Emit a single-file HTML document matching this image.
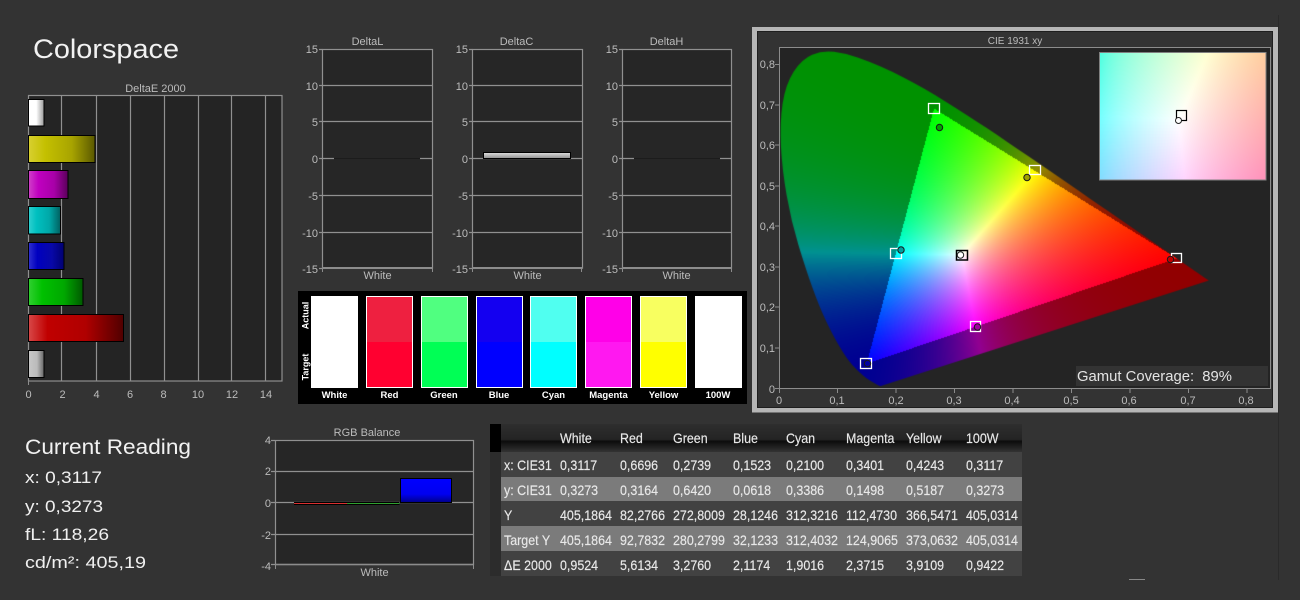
<!DOCTYPE html>
<html><head><meta charset="utf-8"><title>Colorspace</title>
<style>
html,body{margin:0;padding:0;background:#333;width:1300px;height:600px;overflow:hidden}
svg,canvas{position:absolute;left:0;top:0;display:block}
text{font-family:"Liberation Sans",Arial,sans-serif}
.t{font-size:11px;fill:#bcbcbc}
.r{text-anchor:end}
.m{text-anchor:middle}
.s{font-size:9.500px;font-weight:bold;fill:#fff;text-anchor:middle}
.b{fill:#f0f0f0;font-size:17px}
.c text{font-size:14px;fill:#e8e8e8;stroke:#e8e8e8;stroke-width:.15px}
</style></head><body>
<svg width="1300" height="600" viewBox="0 0 1300 600" xmlns="http://www.w3.org/2000/svg">
<defs>
<linearGradient id="gw"><stop offset="0" stop-color="#fff"/><stop offset=".5" stop-color="#fff"/><stop offset="1" stop-color="#999"/></linearGradient>
<linearGradient id="gy"><stop offset="0" stop-color="#d8d030"/><stop offset=".25" stop-color="#c4c000"/><stop offset=".65" stop-color="#a8a400"/><stop offset="1" stop-color="#5a5800"/></linearGradient>
<linearGradient id="gm"><stop offset="0" stop-color="#d040c8"/><stop offset=".25" stop-color="#c000c0"/><stop offset=".65" stop-color="#a800a8"/><stop offset="1" stop-color="#5a005a"/></linearGradient>
<linearGradient id="gc"><stop offset="0" stop-color="#30d0d0"/><stop offset=".25" stop-color="#00c0c0"/><stop offset=".65" stop-color="#00a8a8"/><stop offset="1" stop-color="#006060"/></linearGradient>
<linearGradient id="gb"><stop offset="0" stop-color="#3030d0"/><stop offset=".25" stop-color="#0000c0"/><stop offset=".65" stop-color="#0808a8"/><stop offset="1" stop-color="#000070"/></linearGradient>
<linearGradient id="gg"><stop offset="0" stop-color="#30d030"/><stop offset=".25" stop-color="#00c000"/><stop offset=".65" stop-color="#00a800"/><stop offset="1" stop-color="#005a00"/></linearGradient>
<linearGradient id="gr"><stop offset="0" stop-color="#d84848"/><stop offset=".2" stop-color="#c00000"/><stop offset=".6" stop-color="#b00000"/><stop offset="1" stop-color="#500000"/></linearGradient>
<linearGradient id="ga"><stop offset="0" stop-color="#c8c8c8"/><stop offset=".55" stop-color="#bbb"/><stop offset="1" stop-color="#666"/></linearGradient>
<linearGradient id="gd" x2="0" y2="1"><stop offset="0" stop-color="#e0e0e0"/><stop offset="1" stop-color="#909090"/></linearGradient>
<linearGradient id="gl" x2="0" y2="1"><stop offset="0" stop-color="#0000ff"/><stop offset=".65" stop-color="#0000f0"/><stop offset="1" stop-color="#000088"/></linearGradient>
<linearGradient id="gh" x2="0" y2="1"><stop offset="0" stop-color="#2e2e2e"/><stop offset=".55" stop-color="#242424"/><stop offset=".62" stop-color="#0c0c0c"/><stop offset="1" stop-color="#333"/></linearGradient>
</defs>

<rect x="1278" y="15" width="1" height="565" fill="#2a2a2a"/>
<rect x="1129" y="579" width="16" height="1" fill="#888"/>

<text x="33" y="58" font-size="27" fill="#f2f2f2" textLength="146" lengthAdjust="spacingAndGlyphs">Colorspace</text>

<!-- DeltaE 2000 -->
<text class="t m" x="155.500" y="92">DeltaE 2000</text>
<rect x="28.500" y="95.500" width="253.500" height="285.500" fill="#242424" stroke="#909090" stroke-width="1.200"/>
<g stroke="#909090" stroke-width="1.200"><path d="M61.500 96V381M96.500 96V381M130.500 96V381M164.500 96V381M198.500 96V381M231.500 96V381M265.500 96V381"/></g>
<g stroke="#000" stroke-width="1">
<rect x="28.500" y="99.500" width="15.500" height="26.500" fill="url(#gw)"/>
<rect x="28.500" y="135.500" width="66.500" height="27" fill="url(#gy)"/>
<rect x="28.500" y="170.500" width="39.500" height="28" fill="url(#gm)"/>
<rect x="28.500" y="206.500" width="32" height="27.500" fill="url(#gc)"/>
<rect x="28.500" y="242.500" width="35.500" height="27" fill="url(#gb)"/>
<rect x="28.500" y="278.500" width="54.500" height="27" fill="url(#gg)"/>
<rect x="28.500" y="314.500" width="95" height="27" fill="url(#gr)"/>
<rect x="28.500" y="350.500" width="15.500" height="27" fill="url(#ga)"/>
</g>
<path d="M28.500 381v4" stroke="#8c8c8c"/>
<g><text class="t m" x="28.500" y="398">0</text><text class="t m" x="62.500" y="398">2</text><text class="t m" x="96.500" y="398">4</text><text class="t m" x="130" y="398">6</text><text class="t m" x="163.500" y="398">8</text><text class="t m" x="198" y="398">10</text><text class="t m" x="232" y="398">12</text><text class="t m" x="266" y="398">14</text></g>

<!-- DeltaL -->
<text class="t m" x="367.500" y="45">DeltaL</text>
<rect x="322.500" y="49.500" width="110" height="218.500" fill="#262626" stroke="#909090" stroke-width="1.200"/>
<path d="M319 49.500h3.500M319 85.500h113M319 121.500h113M319 195.500h113M319 232.500h113M319 268.500h3.500M319 158.500h15M420 158.500h12" stroke="#909090" stroke-width="1.200" fill="none"/>
<path d="M334 158.500h86" stroke="#1c1c1c"/>
<path d="M322 268h110.500" stroke="#8c8c8c" stroke-width="2"/>
<path d="M322.500 268v4M432.500 268v4" stroke="#8c8c8c"/>
<g><text class="t r" x="318" y="53">15</text><text class="t r" x="318" y="90">10</text><text class="t r" x="318" y="126">5</text><text class="t r" x="318" y="163">0</text><text class="t r" x="318" y="200">-5</text><text class="t r" x="318" y="237">-10</text><text class="t r" x="318" y="273">-15</text></g>
<text class="t m" x="377.500" y="279">White</text>

<!-- DeltaC -->
<text class="t m" x="516.500" y="45">DeltaC</text>
<rect x="472.500" y="49.500" width="110" height="218.500" fill="#262626" stroke="#909090" stroke-width="1.200"/>
<path d="M469 49.500h3.500M469 85.500h113M469 121.500h113M469 195.500h113M469 232.500h113M469 268.500h3.500M469 158.500h113" stroke="#909090" stroke-width="1.200" fill="none"/>
<path d="M472 268h110.500" stroke="#8c8c8c" stroke-width="2"/>
<path d="M472.500 268v4M581.500 268v4" stroke="#8c8c8c"/>
<rect x="483.500" y="152.500" width="87" height="6" fill="url(#gd)" stroke="#000"/>
<g><text class="t r" x="468" y="53">15</text><text class="t r" x="468" y="90">10</text><text class="t r" x="468" y="126">5</text><text class="t r" x="468" y="163">0</text><text class="t r" x="468" y="200">-5</text><text class="t r" x="468" y="237">-10</text><text class="t r" x="468" y="273">-15</text></g>
<text class="t m" x="527.500" y="279">White</text>

<!-- DeltaH -->
<text class="t m" x="666.500" y="45">DeltaH</text>
<rect x="622.500" y="49.500" width="109" height="218.500" fill="#262626" stroke="#909090" stroke-width="1.200"/>
<path d="M619 49.500h3.500M619 85.500h112M619 121.500h112M619 195.500h112M619 232.500h112M619 268.500h3.500M619 158.500h15M720 158.500h11" stroke="#909090" stroke-width="1.200" fill="none"/>
<path d="M634 158.500h86" stroke="#1c1c1c"/>
<path d="M622 268h109.500" stroke="#8c8c8c" stroke-width="2"/>
<path d="M622.500 268v4M731.500 268v4" stroke="#8c8c8c"/>
<g><text class="t r" x="618" y="53">15</text><text class="t r" x="618" y="90">10</text><text class="t r" x="618" y="126">5</text><text class="t r" x="618" y="163">0</text><text class="t r" x="618" y="200">-5</text><text class="t r" x="618" y="237">-10</text><text class="t r" x="618" y="273">-15</text></g>
<text class="t m" x="676.500" y="279">White</text>

<!-- swatches -->
<rect x="298" y="291" width="449" height="113" fill="#000"/>
<rect x="311" y="296" width="47" height="92" fill="#fff"/>
<rect x="366" y="296" width="47" height="92" fill="#fff"/><rect x="367" y="297" width="45" height="45" fill="#ee2040"/><rect x="367" y="342" width="45" height="45" fill="#ff0030"/>
<rect x="421" y="296" width="47" height="92" fill="#fff"/><rect x="422" y="297" width="45" height="45" fill="#50ff80"/><rect x="422" y="342" width="45" height="45" fill="#00ff55"/>
<rect x="476" y="296" width="47" height="92" fill="#fff"/><rect x="477" y="297" width="45" height="45" fill="#1400f0"/><rect x="477" y="342" width="45" height="45" fill="#0000ff"/>
<rect x="530" y="296" width="47" height="92" fill="#fff"/><rect x="531" y="297" width="45" height="45" fill="#50fff0"/><rect x="531" y="342" width="45" height="45" fill="#00ffff"/>
<rect x="585" y="296" width="47" height="92" fill="#fff"/><rect x="586" y="297" width="45" height="45" fill="#ff00e8"/><rect x="586" y="342" width="45" height="45" fill="#ff18f0"/>
<rect x="640" y="296" width="47" height="92" fill="#fff"/><rect x="641" y="297" width="45" height="45" fill="#f8ff60"/><rect x="641" y="342" width="45" height="45" fill="#ffff00"/>
<rect x="695" y="296" width="47" height="92" fill="#fff"/>
<text class="s" x="334.500" y="398">White</text><text class="s" x="389.500" y="398">Red</text><text class="s" x="444" y="398">Green</text><text class="s" x="499" y="398">Blue</text><text class="s" x="553.500" y="398">Cyan</text><text class="s" x="608.500" y="398">Magenta</text><text class="s" x="663.500" y="398">Yellow</text><text class="s" x="718" y="398">100W</text>
<text class="s" transform="translate(308.500,315.500) rotate(-90)" style="font-size:9px">Actual</text>
<text class="s" transform="translate(308.500,367) rotate(-90)" style="font-size:9px">Target</text>

<!-- Gamut frame -->
<rect x="752" y="27" width="526" height="385.500" fill="#b6b6b6"/>
<rect x="757" y="31" width="516" height="377" fill="#333"/>
<rect x="757.500" y="31.500" width="515" height="376" fill="none" stroke="#1e1e1e"/>
<text class="t m" x="1015" y="44" style="font-size:10px">CIE 1931 xy</text>
<rect x="779.500" y="47.500" width="491" height="341" fill="#242424" stroke="#8c8c8c"/>
<path d="M775 64.500h4M775 105h4M775 145h4M775 186h4M775 226h4M775 267h4M775 307h4M775 348h4M775 388.500h4M779.500 389v4M837.500 389v4M896 389v4M954.500 389v4M1013 389v4M1071.500 389v4M1130 389v4M1188.500 389v4M1247 389v4" stroke="#8c8c8c"/>
<g>
<text class="t r" x="775" y="68">0,8</text><text class="t r" x="775" y="109">0,7</text><text class="t r" x="775" y="149">0,6</text><text class="t r" x="775" y="190">0,5</text><text class="t r" x="775" y="230">0,4</text><text class="t r" x="775" y="271">0,3</text><text class="t r" x="775" y="311">0,2</text><text class="t r" x="775" y="352">0,1</text><text class="t r" x="775" y="393">0</text>
<text class="t m" x="779" y="404">0</text><text class="t m" x="837" y="404">0,1</text><text class="t m" x="896" y="404">0,2</text><text class="t m" x="954" y="404">0,3</text><text class="t m" x="1012" y="404">0,4</text><text class="t m" x="1071" y="404">0,5</text><text class="t m" x="1129" y="404">0,6</text><text class="t m" x="1188" y="404">0,7</text><text class="t m" x="1246" y="404">0,8</text>
</g>
<!-- fallback gamut -->
<polygon points="932,108 1176,258 866,363" fill="#c08040"/>

<!-- Current reading -->
<text x="25" y="454" font-size="21" fill="#f2f2f2" textLength="166" lengthAdjust="spacingAndGlyphs">Current Reading</text>
<text class="b" x="25" y="483" textLength="77" lengthAdjust="spacingAndGlyphs">x: 0,3117</text>
<text class="b" x="25" y="512" textLength="78" lengthAdjust="spacingAndGlyphs">y: 0,3273</text>
<text class="b" x="25" y="540" textLength="84" lengthAdjust="spacingAndGlyphs">fL: 118,26</text>
<text class="b" x="25" y="568" textLength="121" lengthAdjust="spacingAndGlyphs">cd/m²: 405,19</text>

<!-- RGB balance -->
<text class="t m" x="367" y="436">RGB Balance</text>
<rect x="275.500" y="440.500" width="198" height="124" fill="#262626" stroke="#909090" stroke-width="1.200"/>
<path d="M271 440.500h4M271 471.500h202M271 502.500h202M271 534.500h202M271 564.500h4" stroke="#909090" stroke-width="1.200"/>
<path d="M275 564.500h198.500" stroke="#8c8c8c" stroke-width="1.500"/>
<path d="M275.500 565v4M473.500 565v4" stroke="#8c8c8c"/>
<g><text class="t r" x="271" y="444">4</text><text class="t r" x="271" y="475">2</text><text class="t r" x="271" y="507">0</text><text class="t r" x="271" y="539">-2</text><text class="t r" x="271" y="570">-4</text></g>
<text class="t m" x="374.500" y="576">White</text>
<rect x="294" y="502" width="53" height="1" fill="#000"/><rect x="294" y="503" width="53" height="1" fill="#d83030"/><rect x="294" y="504" width="53" height="1" fill="#000"/>
<rect x="347" y="502" width="52.500" height="1" fill="#000"/><rect x="347" y="503" width="52.500" height="1" fill="#30a030"/><rect x="347" y="504" width="52.500" height="1" fill="#000"/>
<rect x="400.500" y="478.500" width="51" height="24" fill="url(#gl)" stroke="#000"/>

<!-- Table -->
<rect x="490" y="424" width="532" height="28" fill="url(#gh)"/>
<rect x="490" y="424" width="11" height="28" fill="#000"/>
<rect x="490" y="452" width="11" height="124" fill="#2c2c2c"/>
<rect x="501" y="452" width="521" height="25" fill="#424242"/>
<rect x="501" y="477" width="521" height="24" fill="#7b7b7b"/>
<rect x="501" y="501" width="521" height="25" fill="#424242"/>
<rect x="501" y="526" width="521" height="25" fill="#7b7b7b"/>
<rect x="501" y="551" width="521" height="25" fill="#424242"/>

<g class="c" transform="translate(504,0) scale(.89,1)"><text y="470">x: CIE31</text><text y="495">y: CIE31</text><text y="520">Y</text><text y="545">Target Y</text><text y="570">ΔE 2000</text></g>
<g class="c" transform="translate(560,0) scale(.89,1)"><text y="443">White</text><text y="470">0,3117</text><text y="495">0,3273</text><text y="520">405,1864</text><text y="545">405,1864</text><text y="570">0,9524</text></g>
<g class="c" transform="translate(620,0) scale(.89,1)"><text y="443">Red</text><text y="470">0,6696</text><text y="495">0,3164</text><text y="520">82,2766</text><text y="545">92,7832</text><text y="570">5,6134</text></g>
<g class="c" transform="translate(673,0) scale(.89,1)"><text y="443">Green</text><text y="470">0,2739</text><text y="495">0,6420</text><text y="520">272,8009</text><text y="545">280,2799</text><text y="570">3,2760</text></g>
<g class="c" transform="translate(733,0) scale(.89,1)"><text y="443">Blue</text><text y="470">0,1523</text><text y="495">0,0618</text><text y="520">28,1246</text><text y="545">32,1233</text><text y="570">2,1174</text></g>
<g class="c" transform="translate(786,0) scale(.89,1)"><text y="443">Cyan</text><text y="470">0,2100</text><text y="495">0,3386</text><text y="520">312,3216</text><text y="545">312,4032</text><text y="570">1,9016</text></g>
<g class="c" transform="translate(846,0) scale(.89,1)"><text y="443">Magenta</text><text y="470">0,3401</text><text y="495">0,1498</text><text y="520">112,4730</text><text y="545">124,9065</text><text y="570">2,3715</text></g>
<g class="c" transform="translate(906,0) scale(.89,1)"><text y="443">Yellow</text><text y="470">0,4243</text><text y="495">0,5187</text><text y="520">366,5471</text><text y="545">373,0632</text><text y="570">3,9109</text></g>
<g class="c" transform="translate(966,0) scale(.89,1)"><text y="443">100W</text><text y="470">0,3117</text><text y="495">0,3273</text><text y="520">405,0314</text><text y="545">405,0314</text><text y="570">0,9422</text></g>
</svg>

<canvas id="g" width="440" height="341" style="left:779px;top:48px"></canvas>
<canvas id="n" width="166" height="127" style="left:1100px;top:53px"></canvas>

<svg width="1300" height="600" viewBox="0 0 1300 600" xmlns="http://www.w3.org/2000/svg">
<rect x="1099.500" y="52.500" width="166.500" height="127.500" fill="none" stroke="#808080"/>
<g fill="none" stroke="#fff" stroke-width="1.300">
<rect x="928.500" y="103.500" width="11" height="10"/>
<rect x="1029.500" y="165.500" width="11" height="9"/>
<rect x="890.500" y="248.500" width="11" height="10"/>
<rect x="1171.500" y="253.500" width="10" height="9"/>
<rect x="970.500" y="321.500" width="10" height="10"/>
<rect x="860.500" y="358.500" width="11" height="10"/>
</g>
<g stroke="#1a1a1a" stroke-width="1">
<circle cx="939.500" cy="127.500" r="3.200" fill="#00a000"/>
<circle cx="1027" cy="177.500" r="3.200" fill="#a0a000"/>
<circle cx="901" cy="250" r="3.200" fill="#00a0a0"/>
<circle cx="1170.500" cy="259.500" r="3.200" fill="#c00000"/>
<circle cx="977.500" cy="327" r="3.200" fill="#a000a0"/>
<circle cx="867.500" cy="363.500" r="3.200" fill="#0000a0"/>
</g>
<rect x="956.500" y="250.500" width="11" height="9.500" fill="none" stroke="#000" stroke-width="1.500"/>
<circle cx="960.500" cy="255" r="3.200" fill="#fff" stroke="#222"/>
<rect x="1176.500" y="110.500" width="10" height="10" fill="none" stroke="#000" stroke-width="1.200"/>
<circle cx="1178.500" cy="120.500" r="3" fill="#fff" stroke="#222"/>
<rect x="1076" y="366" width="192" height="20" fill="#333"/>
<text x="1077" y="381" font-size="15" fill="#e4e4e4" textLength="155" lengthAdjust="spacingAndGlyphs" xml:space="preserve">Gamut Coverage:  89%</text>
</svg>

<script>
(function(){
var L=[[.1741,.005],[.1714,.0051],[.1644,.0109],[.1566,.0177],[.144,.0297],[.1241,.0578],[.1096,.0868],[.0913,.1327],[.0687,.2007],[.0454,.295],[.0235,.4127],[.0082,.5384],[.0039,.6548],[.0139,.7502],[.0389,.812],[.0743,.8338],[.1142,.8262],[.1547,.8059],[.1929,.7816],[.2296,.7543],[.2658,.7243],[.3016,.6923],[.3373,.6589],[.3731,.6245],[.4087,.5896],[.4441,.5547],[.4788,.5202],[.5125,.4866],[.5448,.4544],[.5752,.4242],[.6029,.3965],[.627,.3725],[.6658,.334],[.6915,.3083],[.7079,.292],[.719,.2809],[.7347,.2653]];
var R=[.68,.32],G=[.265,.69],B=[.15,.06];
var d=(G[1]-B[1])*(R[0]-B[0])+(B[0]-G[0])*(R[1]-B[1]);
function bary(x,y){var a=((G[1]-B[1])*(x-B[0])+(B[0]-G[0])*(y-B[1]))/d,b=((B[1]-R[1])*(x-B[0])+(R[0]-B[0])*(y-B[1]))/d;return [a,b,1-a-b];}
var W=bary(.3127,.329);
function col(x,y,gam,out){
 var c=bary(x,y),ins=c[0]>=0&&c[1]>=0&&c[2]>=0;
 var r=Math.max(c[0]/W[0],0),g=Math.max(c[1]/W[1],0),b=Math.max(c[2]/W[2],0);
 var m=Math.max(r,g,b)||1;r/=m;g/=m;b/=m;
 var k=ins?1:.57,e=ins?gam:out;
 return [255*k*Math.pow(r,e),255*k*Math.pow(g,e),255*k*Math.pow(b,e)];
}
function fill(ctx,w,h,fx,fy,gam,out){
 var im=ctx.createImageData(w,h),p=im.data,i,j,n=0,c;
 for(j=0;j<h;j++)for(i=0;i<w;i++){c=col(fx(i+.5),fy(j+.5),gam,out);p[n++]=c[0];p[n++]=c[1];p[n++]=c[2];p[n++]=255;}
 ctx.putImageData(im,0,0);
}
var gc=document.getElementById('g'),o=document.createElement('canvas');o.width=440;o.height=341;
fill(o.getContext('2d'),440,341,function(i){return i/585},function(j){return (340-j)/405},1,1.5);
var x=gc.getContext('2d');
var P=L.map(function(p,i){return [p[0]*585-((i>=10&&i<=13)?1.6:0),340-p[1]*405];});
x.beginPath();x.moveTo(P[0][0],P[0][1]);
for(var i=1;i<P.length-1;i++){x.quadraticCurveTo(P[i][0],P[i][1],(P[i][0]+P[i+1][0])/2,(P[i][1]+P[i+1][1])/2);}
x.lineTo(P[P.length-1][0],P[P.length-1][1]);
x.closePath();x.clip();x.drawImage(o,0,0);
var nc=document.getElementById('n').getContext('2d');
fill(nc,166,127,function(i){return .3127+(i-79)/166*.2},function(j){return .329+(67-j)/127*.11},.38,.38);
})();
</script>
</body></html>
